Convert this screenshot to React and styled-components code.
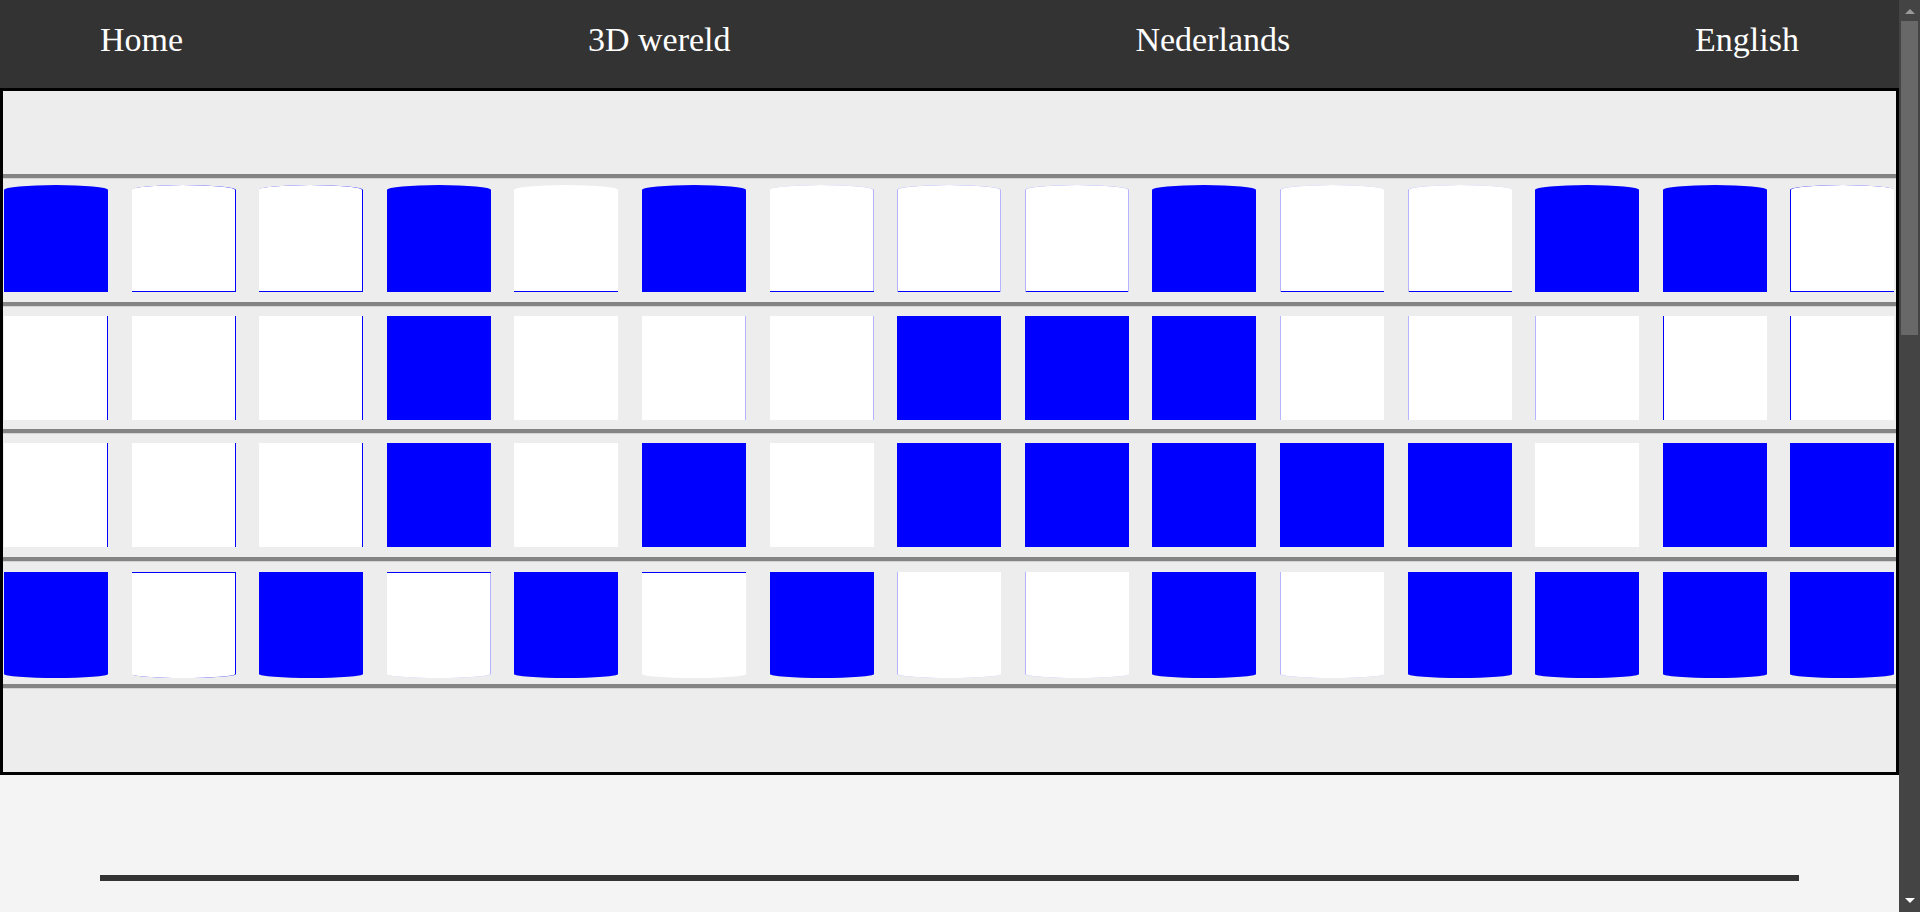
import React from 'react';
import styled, { createGlobalStyle, css } from 'styled-components';

const GlobalStyle = createGlobalStyle`
  html, body { margin: 0; height: 100%; overflow: hidden; background: #f4f4f4; }
  body { font-family: "Liberation Serif", "Times New Roman", serif; }
`;

const Shell = styled.div`
  display: flex;
  height: 100vh;
  background: #f4f4f4;
`;

const Main = styled.main`
  flex: 1;
  min-width: 0;
  overflow: hidden;
`;

const ScrollBar = styled.div`
  flex: none;
  width: 21px;
  background: #444444;
  display: flex;
  flex-direction: column;
  align-items: center;
`;

const ArrowSlot = styled.div`
  height: 19px;
  display: flex;
  justify-content: center;
  align-items: ${(p) => (p.$down ? 'flex-start' : 'flex-end')};
  padding: ${(p) => (p.$down ? '5px 0 0' : '0 0 5px')};
  box-sizing: border-box;
  width: 100%;
`;

const Thumb = styled.div`
  width: 17px;
  height: 314px;
  margin-top: 2px;
  background: #686868;
`;

const Track = styled.div`
  flex: 1;
`;

const Header = styled.header`
  height: 88px;
  box-sizing: border-box;
  background: #333333;
  padding: 21px 100px 0;
  display: flex;
  justify-content: space-between;
  align-items: flex-start;
`;

const NavLink = styled.a`
  color: #ffffff;
  font-size: 34px;
  line-height: normal;
  text-decoration: none;
`;

const Stage = styled.section`
  border: 3px solid #000000;
  background: #ededed;
  overflow: hidden;
  padding: 83px 0;
`;

const Rail = styled.div`
  height: 4px;
  background: #848484;
  border-bottom: 1px solid #d4d4d4;
`;

const CubeRow = styled.div`
  height: 122.5px;
  box-sizing: border-box;
  display: flex;
  align-items: flex-start;
  gap: 23.6px;
  padding-left: 1px;
  padding-top: ${(p) => p.$top}px;
`;

const Drum = styled.div`
  flex: none;
  width: 104px;
  height: ${(p) => p.$h}px;
  box-sizing: border-box;
  background: ${(p) => (p.$blue ? '#0000ff' : '#ffffff')};
  box-shadow: ${(p) => p.$shadow};
  ${(p) =>
    p.$cap === 'top' &&
    css`
      border-radius: 50% 50% 0 0 / 5px 5px 0 0;
    `}
  ${(p) =>
    p.$cap === 'bottom' &&
    css`
      border-radius: 0 0 50% 50% / 0 0 4px 4px;
    `}
`;

const Footer = styled.footer`
  padding: 100px 100px 0;
`;

const FooterRule = styled.div`
  height: 6px;
  background: #333333;
`;

const rows = [
  {
    top: 6,
    h: 107,
    cap: 'top',
    cells: ['B', 'Wrb', 'Wrb', 'B', 'Wb', 'B', 'WbR', 'WLRb', 'WLRb', 'B', 'WLb', 'WLb', 'B', 'B', 'Wlb'],
  },
  {
    top: 9,
    h: 104,
    cap: null,
    cells: ['Wr', 'Wr', 'Wr', 'B', 'W', 'WR', 'WR', 'B', 'B', 'B', 'WL', 'WL', 'WL', 'Wl', 'Wl'],
  },
  {
    top: 9,
    h: 104,
    cap: null,
    cells: ['Wr', 'Wr', 'Wr', 'B', 'W', 'B', 'W', 'B', 'B', 'B', 'B', 'B', 'W', 'B', 'B'],
  },
  {
    top: 10,
    h: 106,
    cap: 'bottom',
    cells: ['B', 'Wrt', 'B', 'WtR', 'B', 'Wt', 'B', 'WL', 'WL', 'B', 'WL', 'B', 'B', 'B', 'B'],
  },
];

const STRONG = '#0000ff';
const FAINT = '#b4b4ff';

function shadowFor(code) {
  const parts = [];
  for (const ch of code.slice(1)) {
    const color = ch === ch.toUpperCase() ? FAINT : STRONG;
    const k = ch.toLowerCase();
    if (k === 'r') parts.push(`inset -1px 0 0 ${color}`);
    if (k === 'l') parts.push(`inset 1px 0 0 ${color}`);
    if (k === 'b') parts.push(`inset 0 -1px 0 ${color}`);
    if (k === 't') parts.push(`inset 0 1px 0 ${color}`);
  }
  return parts.length ? parts.join(', ') : 'none';
}

const Arrow = ({ down, color }) => (
  <svg width="10" height="5" viewBox="0 0 10 5" aria-hidden="true">
    <polygon points={down ? '0,0 10,0 5,5' : '0,5 10,5 5,0'} fill={color} />
  </svg>
);

export default function App() {
  return (
    <Shell>
      <GlobalStyle />
      <Main>
        <Header>
          <NavLink href="#">Home</NavLink>
          <NavLink href="#">3D wereld</NavLink>
          <NavLink href="#">Nederlands</NavLink>
          <NavLink href="#">English</NavLink>
        </Header>
        <Stage>
          {rows.map((row, ri) => (
            <React.Fragment key={ri}>
              <Rail />
              <CubeRow $top={row.top}>
                {row.cells.map((code, ci) => (
                  <Drum
                    key={ci}
                    $blue={code[0] === 'B'}
                    $h={row.h}
                    $cap={row.cap}
                    $shadow={shadowFor(code)}
                  />
                ))}
              </CubeRow>
            </React.Fragment>
          ))}
          <Rail />
        </Stage>
        <Footer>
          <FooterRule />
        </Footer>
      </Main>
      <ScrollBar>
        <ArrowSlot>
          <Arrow color="#9a9a9a" />
        </ArrowSlot>
        <Thumb />
        <Track />
        <ArrowSlot $down>
          <Arrow down color="#ffffff" />
        </ArrowSlot>
      </ScrollBar>
    </Shell>
  );
}
